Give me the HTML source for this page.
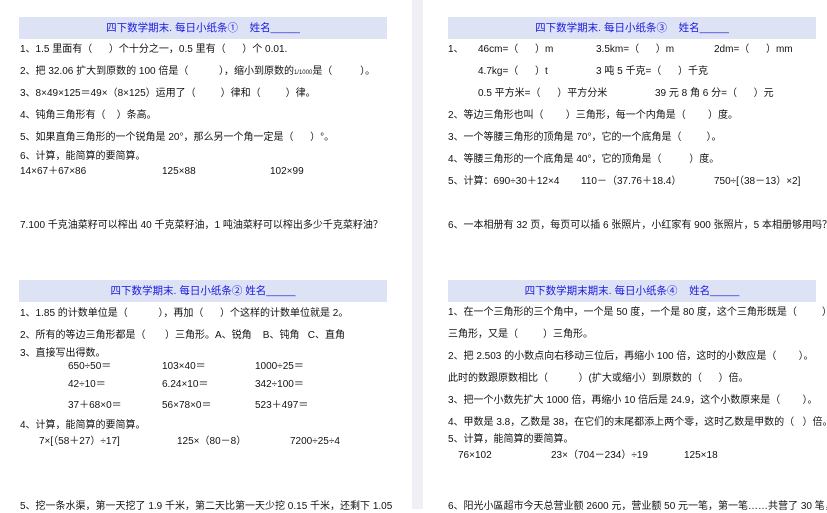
<!DOCTYPE html>
<html><head><meta charset="utf-8"><style>
body{margin:0;width:827px;height:509px;overflow:hidden;background:#fff;position:relative;font-family:"Liberation Sans","Noto Sans CJK SC",sans-serif;font-size:10px;color:#111}
.g{position:absolute;left:412px;top:0;width:11px;height:509px;background:#eef0f6}
.h{position:absolute;height:22px;background:#dde3f4;color:#1a1ae0;text-align:center;line-height:22px;font-size:10.5px}
.t{position:absolute;white-space:pre;line-height:12px}
</style></head><body>
<div class="g"></div>
<div class="h" style="left:19px;top:17px;width:368px">四下数学期末. 每日小纸条①&nbsp;&nbsp;&nbsp;&nbsp;姓名_____</div>
<div class="t" style="left:20px;top:44px">1、1.5 里面有（&nbsp;&nbsp;&nbsp;&nbsp;&nbsp;&nbsp;）个十分之一，0.5 里有（&nbsp;&nbsp;&nbsp;&nbsp;&nbsp;&nbsp;）个 0.01.</div>
<div class="t" style="left:20px;top:66px">2、把 32.06 扩大到原数的 100 倍是（&nbsp;&nbsp;&nbsp;&nbsp;&nbsp;&nbsp;&nbsp;&nbsp;&nbsp;&nbsp;&nbsp;），缩小到原数的<span style="font-size:6px">1/1000</span>是（&nbsp;&nbsp;&nbsp;&nbsp;&nbsp;&nbsp;&nbsp;&nbsp;&nbsp;&nbsp;）。</div>
<div class="t" style="left:20px;top:88px">3、8×49×125＝49×（8×125）运用了（&nbsp;&nbsp;&nbsp;&nbsp;&nbsp;&nbsp;&nbsp;&nbsp;&nbsp;）律和（&nbsp;&nbsp;&nbsp;&nbsp;&nbsp;&nbsp;&nbsp;&nbsp;&nbsp;）律。</div>
<div class="t" style="left:20px;top:110px">4、钝角三角形有（&nbsp;&nbsp;&nbsp;&nbsp;）条高。</div>
<div class="t" style="left:20px;top:132px">5、如果直角三角形的一个锐角是 20°，那么另一个角一定是（&nbsp;&nbsp;&nbsp;&nbsp;&nbsp;&nbsp;）°。</div>
<div class="t" style="left:20px;top:151px">6、计算，能简算的要简算。</div>
<div class="t" style="left:20px;top:166px">14×67＋67×86</div>
<div class="t" style="left:162px;top:166px">125×88</div>
<div class="t" style="left:270px;top:166px">102×99</div>
<div class="t" style="left:20px;top:220px">7.100 千克油菜籽可以榨出 40 千克菜籽油，1 吨油菜籽可以榨出多少千克菜籽油？</div>

<div class="h" style="left:19px;top:280px;width:368px">四下数学期末. 每日小纸条② 姓名_____</div>
<div class="t" style="left:20px;top:308px">1、1.85 的计数单位是（&nbsp;&nbsp;&nbsp;&nbsp;&nbsp;&nbsp;&nbsp;&nbsp;&nbsp;&nbsp;&nbsp;），再加（&nbsp;&nbsp;&nbsp;&nbsp;&nbsp;&nbsp;）个这样的计数单位就是 2。</div>
<div class="t" style="left:20px;top:330px">2、所有的等边三角形都是（&nbsp;&nbsp;&nbsp;&nbsp;&nbsp;&nbsp;&nbsp;）三角形。A、锐角&nbsp;&nbsp;&nbsp;&nbsp;B、钝角&nbsp;&nbsp;&nbsp;C、直角</div>
<div class="t" style="left:20px;top:348px">3、直接写出得数。</div>
<div class="t" style="left:68px;top:361px">650÷50＝</div><div class="t" style="left:162px;top:361px">103×40＝</div><div class="t" style="left:255px;top:361px">1000÷25＝</div>
<div class="t" style="left:68px;top:379px">42÷10＝</div><div class="t" style="left:162px;top:379px">6.24×10＝</div><div class="t" style="left:255px;top:379px">342÷100＝</div>
<div class="t" style="left:68px;top:400px">37＋68×0＝</div><div class="t" style="left:162px;top:400px">56×78×0＝</div><div class="t" style="left:255px;top:400px">523＋497＝</div>
<div class="t" style="left:20px;top:420px">4、计算，能简算的要简算。</div>
<div class="t" style="left:39px;top:436px">7×[（58＋27）÷17]</div><div class="t" style="left:177px;top:436px">125×（80－8）</div><div class="t" style="left:290px;top:436px">7200÷25÷4</div>
<div class="t" style="left:20px;top:501px">5、挖一条水渠，第一天挖了 1.9 千米，第二天比第一天少挖 0.15 千米，还剩下 1.05</div>

<div class="h" style="left:448px;top:17px;width:368px">四下数学期末. 每日小纸条③&nbsp;&nbsp;&nbsp;&nbsp;姓名_____</div>
<div class="t" style="left:448px;top:44px">1、</div>
<div class="t" style="left:478px;top:44px">46cm=（&nbsp;&nbsp;&nbsp;&nbsp;&nbsp;&nbsp;）m</div><div class="t" style="left:596px;top:44px">3.5km=（&nbsp;&nbsp;&nbsp;&nbsp;&nbsp;&nbsp;）m</div><div class="t" style="left:714px;top:44px">2dm=（&nbsp;&nbsp;&nbsp;&nbsp;&nbsp;&nbsp;）mm</div>
<div class="t" style="left:478px;top:66px">4.7kg=（&nbsp;&nbsp;&nbsp;&nbsp;&nbsp;&nbsp;）t</div><div class="t" style="left:596px;top:66px">3 吨 5 千克=（&nbsp;&nbsp;&nbsp;&nbsp;&nbsp;&nbsp;）千克</div>
<div class="t" style="left:478px;top:88px">0.5 平方米=（&nbsp;&nbsp;&nbsp;&nbsp;&nbsp;&nbsp;）平方分米</div><div class="t" style="left:655px;top:88px">39 元 8 角 6 分=（&nbsp;&nbsp;&nbsp;&nbsp;&nbsp;&nbsp;）元</div>
<div class="t" style="left:448px;top:110px">2、等边三角形也叫（&nbsp;&nbsp;&nbsp;&nbsp;&nbsp;&nbsp;&nbsp;&nbsp;）三角形，每一个内角是（&nbsp;&nbsp;&nbsp;&nbsp;&nbsp;&nbsp;&nbsp;&nbsp;）度。</div>
<div class="t" style="left:448px;top:132px">3、一个等腰三角形的顶角是 70°，它的一个底角是（&nbsp;&nbsp;&nbsp;&nbsp;&nbsp;&nbsp;&nbsp;&nbsp;&nbsp;）。</div>
<div class="t" style="left:448px;top:154px">4、等腰三角形的一个底角是 40°，它的顶角是（&nbsp;&nbsp;&nbsp;&nbsp;&nbsp;&nbsp;&nbsp;&nbsp;&nbsp;&nbsp;）度。</div>
<div class="t" style="left:448px;top:176px">5、计算：690÷30＋12×4</div><div class="t" style="left:581px;top:176px">110－（37.76＋18.4）</div><div class="t" style="left:714px;top:176px">750÷[（38－13）×2]</div>
<div class="t" style="left:448px;top:220px">6、一本相册有 32 页，每页可以插 6 张照片，小红家有 900 张照片，5 本相册够用吗？</div>

<div class="h" style="left:448px;top:280px;width:368px">四下数学期末期末. 每日小纸条④&nbsp;&nbsp;&nbsp;&nbsp;姓名_____</div>
<div class="t" style="left:448px;top:307px">1、在一个三角形的三个角中，一个是 50 度，一个是 80 度，这个三角形既是（&nbsp;&nbsp;&nbsp;&nbsp;&nbsp;&nbsp;&nbsp;&nbsp;&nbsp;）</div>
<div class="t" style="left:448px;top:329px">三角形，又是（&nbsp;&nbsp;&nbsp;&nbsp;&nbsp;&nbsp;&nbsp;&nbsp;&nbsp;）三角形。</div>
<div class="t" style="left:448px;top:351px">2、把 2.503 的小数点向右移动三位后，再缩小 100 倍，这时的小数应是（&nbsp;&nbsp;&nbsp;&nbsp;&nbsp;&nbsp;&nbsp;&nbsp;）。</div>
<div class="t" style="left:448px;top:373px">此时的数跟原数相比（&nbsp;&nbsp;&nbsp;&nbsp;&nbsp;&nbsp;&nbsp;&nbsp;&nbsp;&nbsp;&nbsp;）(扩大或缩小）到原数的（&nbsp;&nbsp;&nbsp;&nbsp;&nbsp;&nbsp;）倍。</div>
<div class="t" style="left:448px;top:395px">3、把一个小数先扩大 1000 倍，再缩小 10 倍后是 24.9，这个小数原来是（&nbsp;&nbsp;&nbsp;&nbsp;&nbsp;&nbsp;&nbsp;&nbsp;）。</div>
<div class="t" style="left:448px;top:417px">4、甲数是 3.8，乙数是 38，在它们的末尾都添上两个零，这时乙数是甲数的（&nbsp;&nbsp;&nbsp;）倍。</div>
<div class="t" style="left:448px;top:434px">5、计算，能简算的要简算。</div>
<div class="t" style="left:458px;top:450px">76×102</div><div class="t" style="left:551px;top:450px">23×（704－234）÷19</div><div class="t" style="left:684px;top:450px">125×18</div>
<div class="t" style="left:448px;top:501px">6、阳光小區超市今天总营业额 2600 元，营业额 50 元一笔，第一笔……共营了 30 笔，剩</div>
</body></html>
